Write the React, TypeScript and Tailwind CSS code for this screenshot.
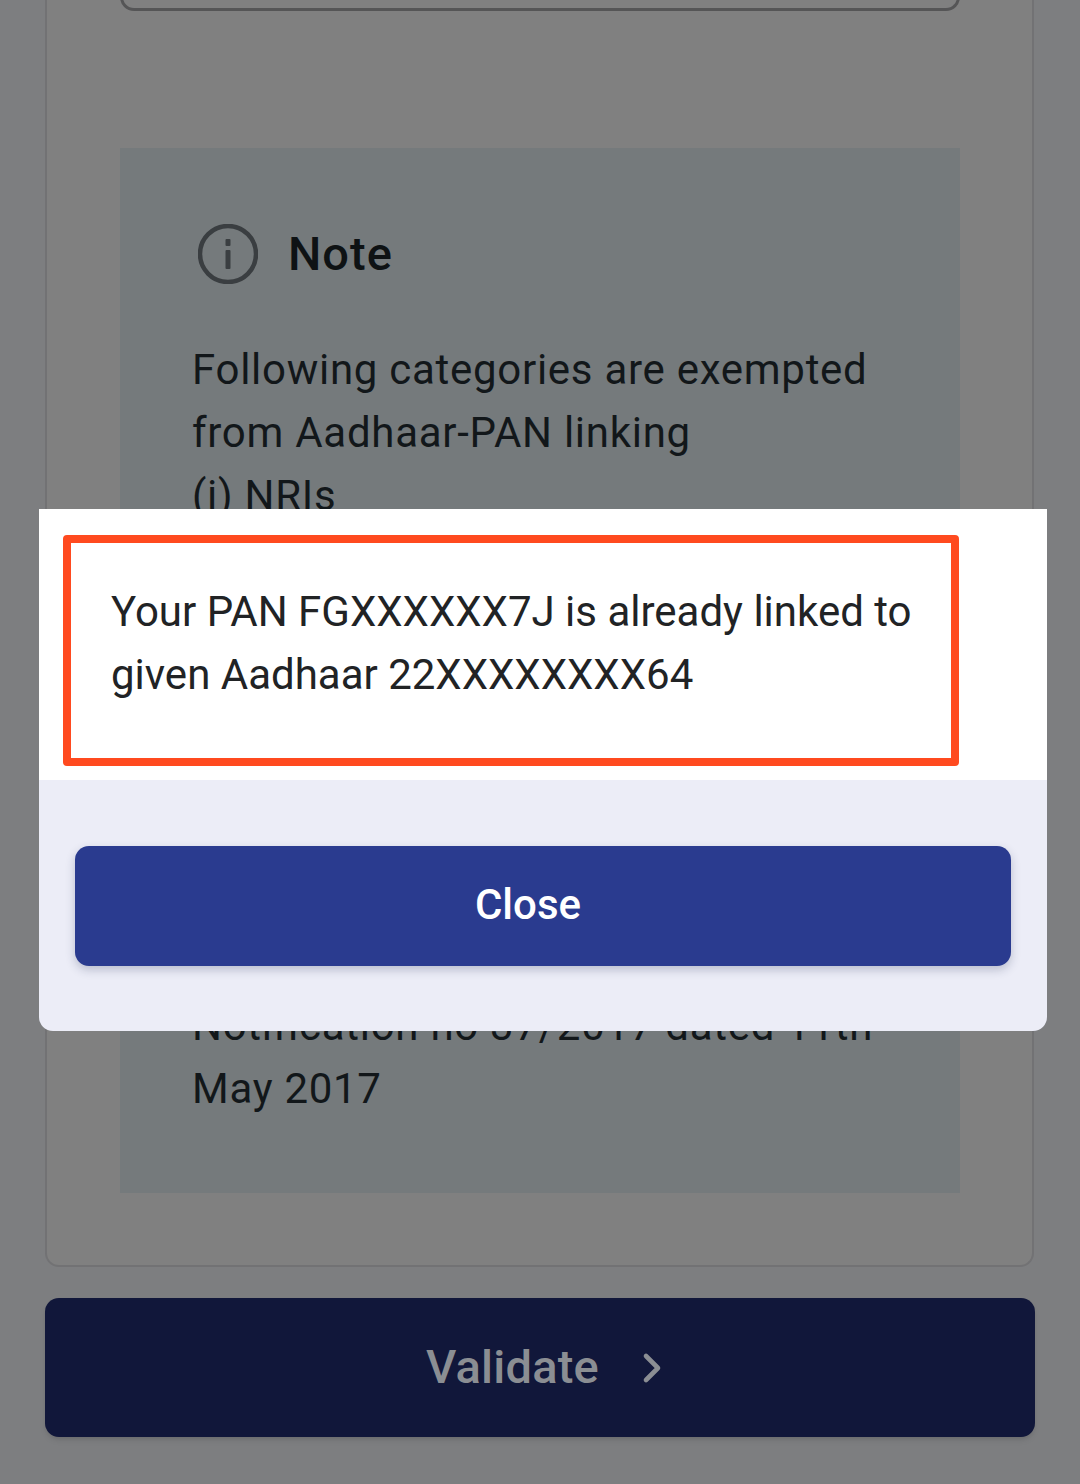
import React from 'react';
import { ChevronRight } from 'lucide-react';

function InfoIcon() {
  return (
    <svg width="60" height="60" viewBox="0 0 60 60" fill="none" className="shrink-0">
      <circle cx="30" cy="30" r="28" stroke="#3a3e41" strokeWidth="4.5" />
      <rect x="27.5" y="15" width="5" height="7" rx="1" fill="#3a3e41" />
      <rect x="27.5" y="26" width="5" height="19" rx="1" fill="#3a3e41" />
    </svg>
  );
}

export default function App() {
  return (
    <div className="relative h-[1484px] w-[1080px] overflow-hidden bg-[#7d7e80] px-[45px] font-['Roboto',sans-serif]">
      {/* dimmed page behind the dialog */}
      <div className="-mt-[40px] mr-[1px] rounded-b-[14px] border-2 border-t-0 border-[#727274] bg-[#808080] pb-[72px] pl-[73px] pr-[72px]">
        <div className="h-[51px] rounded-b-[14px] border-[3px] border-t-0 border-[#555556]" />

        <div className="mt-[137px] h-[1045px] overflow-hidden bg-[#757a7c] pl-[72px] pr-[60px] pt-[75px] text-[#12171a]">
          <div className="flex items-center gap-[30px] pl-[6px]">
            <InfoIcon />
            <span className="text-[47px] font-medium leading-[62px] tracking-[1px] text-[#0e1214]">Note</span>
          </div>
          <div className="mt-[53px] text-[42px] leading-[63px] tracking-[0.72px]">
            <p>Following categories are exempted</p>
            <p>from Aadhaar-PAN linking</p>
            <p>(i) NRIs</p>
            <p className="mt-[467px]">Notification no 37/2017 dated 11th</p>
            <p>May 2017</p>
          </div>
        </div>
      </div>

      <button className="mt-[31px] flex h-[139px] w-[990px] items-center justify-center gap-[29px] rounded-[14px] bg-[#11173a] pl-[22px] shadow-md">
        <span className="text-[47px] font-medium tracking-[0.2px] text-[#8b8e93]">Validate</span>
        <ChevronRight size={48} strokeWidth={2.3} className="text-[#8b8e93]" />
      </button>

      {/* dialog */}
      <div className="absolute left-[39px] top-[509px] flex h-[522px] w-[1008px] flex-col overflow-hidden rounded-b-[14px] bg-[#ecedf7]">
        <div className="h-[271px] bg-white pl-[24px] pt-[26px]">
          <div className="h-[231px] w-[896px] rounded-[4px] border-[8px] border-[#ff4a1f] pl-[40px] pt-[37px] text-[42px] leading-[63px] text-[#212325]">
            <p>Your PAN FGXXXXXX7J is already linked to</p>
            <p>given Aadhaar 22XXXXXXXX64</p>
          </div>
        </div>
        <div className="flex-1 px-[36px] pt-[66px]">
          <button className="flex h-[120px] w-full items-center justify-center rounded-[14px] bg-[#2a3b8f] pb-[4px] pr-[30px] text-[42px] font-medium text-white shadow-[0_4px_10px_rgba(40,50,90,0.25)]">
            Close
          </button>
        </div>
      </div>
    </div>
  );
}
